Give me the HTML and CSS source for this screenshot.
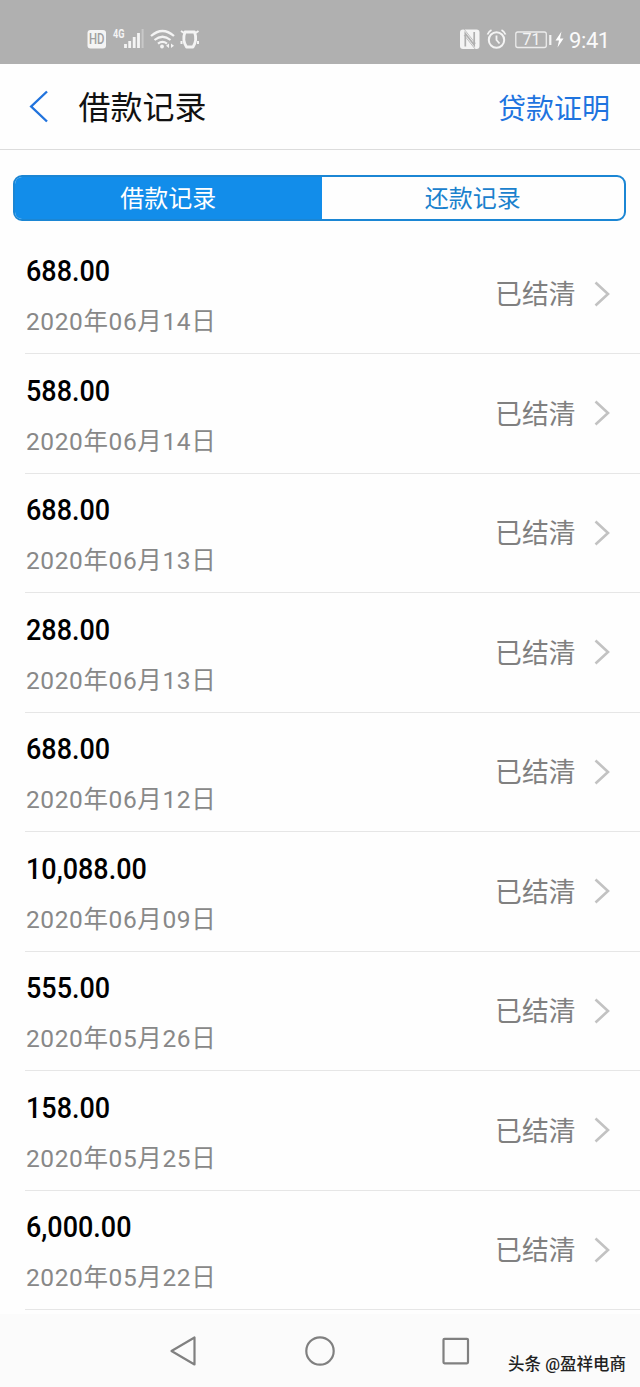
FILE: index.html
```html
<!DOCTYPE html>
<html lang="zh-CN">
   <head>
      <meta charset="utf-8">
      <meta name="viewport" content="width=device-width, initial-scale=1.0"/>
      <title>借款记录</title>
      <link rel="stylesheet" href="styles.css">
   </head>
   <body>
      <!--status bar-->
      <div class="status">
         <svg class="status-left" width="114" height="26" viewBox="0 0 114 26">
            <rect x="1.500" y="4" width="18.500" height="18.500" rx="3" fill="#f4f4f4"/>
            <text class="hd" x="3" y="18.300" textLength="15.500" lengthAdjust="spacingAndGlyphs">HD</text>
            <text class="net" x="27" y="11.500" textLength="11.500" lengthAdjust="spacingAndGlyphs">4G</text>
            <path d="M39.500 22v-4M43.700 22v-7M48.200 22v-11M52.500 22v-15" stroke="#f4f4f4" stroke-width="2.800"/>
            <path d="M56.600 22V3" stroke="#c8c8c8" stroke-width="2"/>
            <path d="M65 10q11.500-10 23 0M68.500 14q8-6.500 16 0M72 17.700q4.500-3.500 9 0" fill="none" stroke="#f4f4f4" stroke-width="2.200"/>
            <circle cx="76" cy="20.500" r="1.900" fill="#f4f4f4"/>
            <path d="M83 17.500v4.500l-3-2.200zM85 17.500v4.500l3-2.200z" fill="#f4f4f4"/>
            <path d="M99 6h9.500q3 8-1.500 15h-6.500q-4.500-7-1.500-15z" fill="none" stroke="#f4f4f4" stroke-width="2.800" stroke-linejoin="round"/>
            <path d="M95 5l3 2M112.500 5l-3 2M95.500 15v3M112 15v3" fill="none" stroke="#f4f4f4" stroke-width="2"/>
         </svg>
         <div class="status-right">
            <svg width="113" height="26" viewBox="0 0 113 26">
               <rect x="4" y="3.500" width="19.500" height="19.500" rx="3" fill="#f4f4f4"/>
               <path d="M9.300 20.500V7.500L18.200 19V6" fill="none" stroke="#b0b0b0" stroke-width="1.700"/>
               <path d="M8 3L19.500 17.500M8 9L19.500 23.500" stroke="#b0b0b0" stroke-width="0.800"/>
               <circle cx="40.500" cy="14" r="7.700" fill="none" stroke="#f4f4f4" stroke-width="2"/>
               <path d="M40.500 9.500V14l3 3.500M31.500 8.500q1-3 4-4.500M49.500 8.500q-1-3-4-4.500" fill="none" stroke="#f4f4f4" stroke-width="1.800"/>
               <rect x="59.800" y="6" width="30.500" height="15.500" rx="2" fill="none" stroke="#ececec" stroke-width="1.300"/>
               <text class="battery" x="66.500" y="19.300">71</text>
               <path d="M94.300 9v10" stroke="#f4f4f4" stroke-width="2.200"/>
               <path d="M105.500 5.500l-6 9h3.500l-1.500 7 6-9h-3.500z" fill="#fff"/>
            </svg>
            <span class="time">9:41</span>
         </div>
      </div>
      <!--title bar-->
      <div class="header">
         <svg class="back" width="22" height="34" viewBox="0 0 22 34">
            <path d="M19 1.500L3.200 16.500l15.800 15" fill="none" stroke="#2173dd" stroke-width="2.400"/>
         </svg>
         <h1>借款记录</h1>
         <a class="proof">贷款证明</a>
      </div>
      <div class="tabs">
         <div class="tab active">借款记录</div>
         <div class="tab">还款记录</div>
      </div>
      <ul class="records" id="records"></ul>
      <!--navigation keys-->
      <div class="navbar">
         <svg width="640" height="73" viewBox="0 0 640 73">
            <g fill="none" stroke="#808080" stroke-width="2.200" stroke-linejoin="round">
               <path d="M171.500 37L194.500 23.500V50.500z"/>
               <circle cx="320" cy="37" r="13.700"/>
               <rect x="443.500" y="24.800" width="24.500" height="24.500" rx="1"/>
            </g>
         </svg>
         <span class="watermark">头条 @盈祥电商</span>
      </div>
      <script src="script.js"></script>
   </body>
</html>
```
FILE: styles.css
```css
body {
margin: 0;
width: 640px;
height: 1387px;
overflow: hidden;
display: flex;
flex-direction: column;
background: #fefefe;
font-family: Roboto, "Noto Sans CJK SC", sans-serif;
}
.status {
display: flex;
justify-content: space-between;
height: 64px;
padding: 26px 31px 0 86px;
box-sizing: border-box;
background: #b0b0b0;
}
.status-right {
display: flex;
}
.hd {
font: 500 14px Roboto, sans-serif;
fill: #a0a0a0;
}
.net {
font: 700 12px Roboto, sans-serif;
fill: #f4f4f4;
}
.battery {
font: 16px Roboto, sans-serif;
fill: #f4f4f4;
}
.time {
width: 40px;
font-size: 22px;
line-height: 29px;
letter-spacing: -0.4px;
white-space: nowrap;
color: #fafafa;
}
.header {
display: flex;
align-items: center;
height: 86px;
padding: 0 30px 0 28px;
box-sizing: border-box;
border-bottom: 1px solid #dcdcdc;
}
h1 {
margin: 3px auto 0 28.5px;
font-size: 32px;
font-weight: 400;
line-height: 40px;
color: #111;
}
.proof {
margin-top: 7px;
font-size: 28px;
line-height: 36px;
color: #1f74df;
}
.tabs {
display: flex;
height: 46px;
margin: 25px 14px 0 13px;
box-sizing: border-box;
border: 2px solid #1b86d4;
border-radius: 9px;
overflow: hidden;
}
.tab {
flex: 1;
font-size: 24px;
line-height: 45px;
text-align: center;
color: #1a81cd;
}
.active {
flex: 0 0 306.5px;
color: white;
background: #128dea;
}
.records {
list-style: none;
margin: 13.5px 0 0 25px;
padding: 0;
}
.record {
display: flex;
align-items: center;
height: 119.5px;
padding-right: 30px;
box-sizing: border-box;
border-bottom: 1px solid #e6e6e6;
}
.info {
margin: 6px auto 0 1px;
}
.amount {
font-size: 29px;
font-weight: 500;
line-height: 40px;
color: #000;
transform: scaleX(0.93);
transform-origin: left;
}
.date {
margin-top: 11px;
font-size: 24.5px;
line-height: 40px;
letter-spacing: 0.6px;
color: #888;
}
.state {
margin: 3px 18.5px 0 0;
font-size: 26.8px;
line-height: 40px;
color: #808080;
}
.navbar {
position: relative;
height: 73px;
margin-top: auto;
background: #fbfbfb;
}
.watermark {
position: absolute;
right: 14px;
top: 39px;
font-size: 16.5px;
font-weight: 500;
line-height: 24px;
white-space: nowrap;
color: #222;
}
```
FILE: script.js
```js
//amount and date of each loan
var records = [
    ["688.00", "2020年06月14日"],
    ["588.00", "2020年06月14日"],
    ["688.00", "2020年06月13日"],
    ["288.00", "2020年06月13日"],
    ["688.00", "2020年06月12日"],
    ["10,088.00", "2020年06月09日"],
    ["555.00", "2020年05月26日"],
    ["158.00", "2020年05月25日"],
    ["6,000.00", "2020年05月22日"]
];
var html = "";
for (var i = 0; i < records.length; i++) {
    html += '<li class="record"><div class="info">' +
        '<div class="amount">' + records[i][0] + '</div>' +
        '<div class="date">' + records[i][1] + '</div></div>' +
        '<span class="state">已结清</span>' +
        '<svg width="16" height="26" viewBox="0 0 16 26">' +
        '<path d="M1.500 1.500L14 13L1.500 24.500" fill="none" stroke="#c2c2c2" stroke-width="2.600"/></svg></li>';
}
document.getElementById("records").innerHTML = html;
```
